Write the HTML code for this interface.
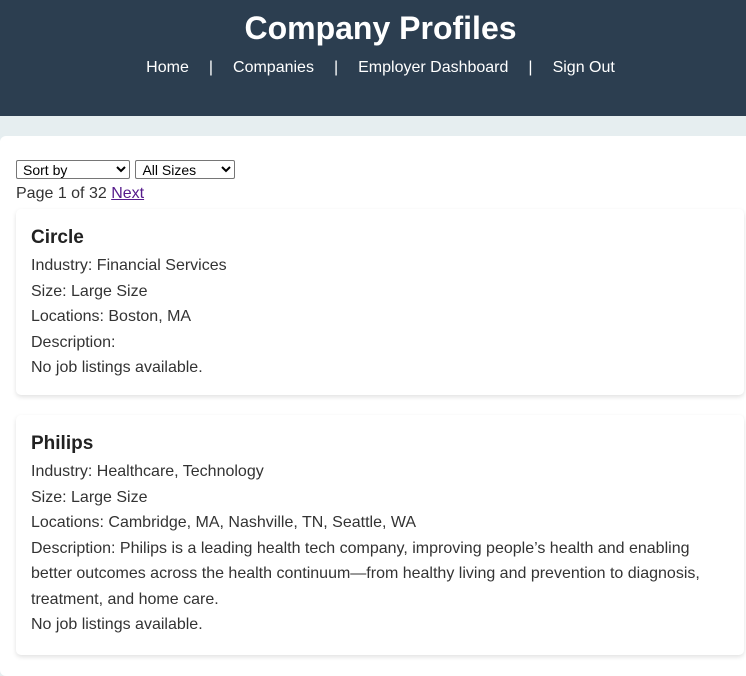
<!DOCTYPE html>
<html><head><style>
body{margin:0;background:#e6eef0;font-family:"Liberation Sans",Arial,sans-serif;color:#333;width:746px;height:666px;overflow:hidden;position:relative}
header{background:#2c3e50;height:116px;color:#fff;text-align:center;width:761px}
h1{margin:0;padding-top:10px;font-size:32px;line-height:36px;font-weight:bold}
nav{margin-top:12px;font-size:16px;line-height:20px;white-space:nowrap}
nav span{margin:0 10px}
nav a{color:#fff;text-decoration:none;margin:0 10px}
.main{position:absolute;top:136px;left:0;width:760px;height:540px;background:#fff;border-radius:6px}
.ctl{position:absolute;top:160px;left:16px}
select{font-family:"Liberation Sans",Arial,sans-serif;font-size:14px;height:19px;padding:0 2px;border:1px solid #767676;border-radius:2px;background:#fff;margin:0;vertical-align:top}
.pg{position:absolute;top:184px;left:16px;font-size:16px;line-height:20px}
.pg a{color:#551a8b}
.card{position:absolute;left:16px;width:698px;padding:17px 15px 15px;background:#fff;border-radius:5px;box-shadow:0 2px 5px rgba(0,0,0,.12)}
.card h3{margin:0 0 3px;font-size:19px;line-height:24px;color:#222}
.card p{margin:0;font-size:16px;line-height:25.5px}
</style></head><body>
<header><h1>Company Profiles</h1>
<nav><a>Home</a><span>|</span><a>Companies</a><span>|</span><a>Employer Dashboard</a><span>|</span><a>Sign Out</a></nav></header>
<div class="main"></div>
<div class="ctl"><select style="width:114px"><option>Sort by</option></select> <select style="width:100px;margin-left:1px"><option>All Sizes</option></select></div>
<div class="pg">Page 1 of 32 <a href="#">Next</a></div>
<div class="card" style="top:209px;height:154px">
<h3>Circle</h3>
<p>Industry: Financial Services</p><p>Size: Large Size</p><p>Locations: Boston, MA</p><p>Description:</p><p>No job listings available.</p></div>
<div class="card" style="top:415px;height:208px">
<h3>Philips</h3>
<p>Industry: Healthcare, Technology</p><p>Size: Large Size</p><p>Locations: Cambridge, MA, Nashville, TN, Seattle, WA</p><p>Description: Philips is a leading health tech company, improving people’s health and enabling better outcomes across the health continuum—from healthy living and prevention to diagnosis, treatment, and home care.</p><p>No job listings available.</p></div>
</body></html>
